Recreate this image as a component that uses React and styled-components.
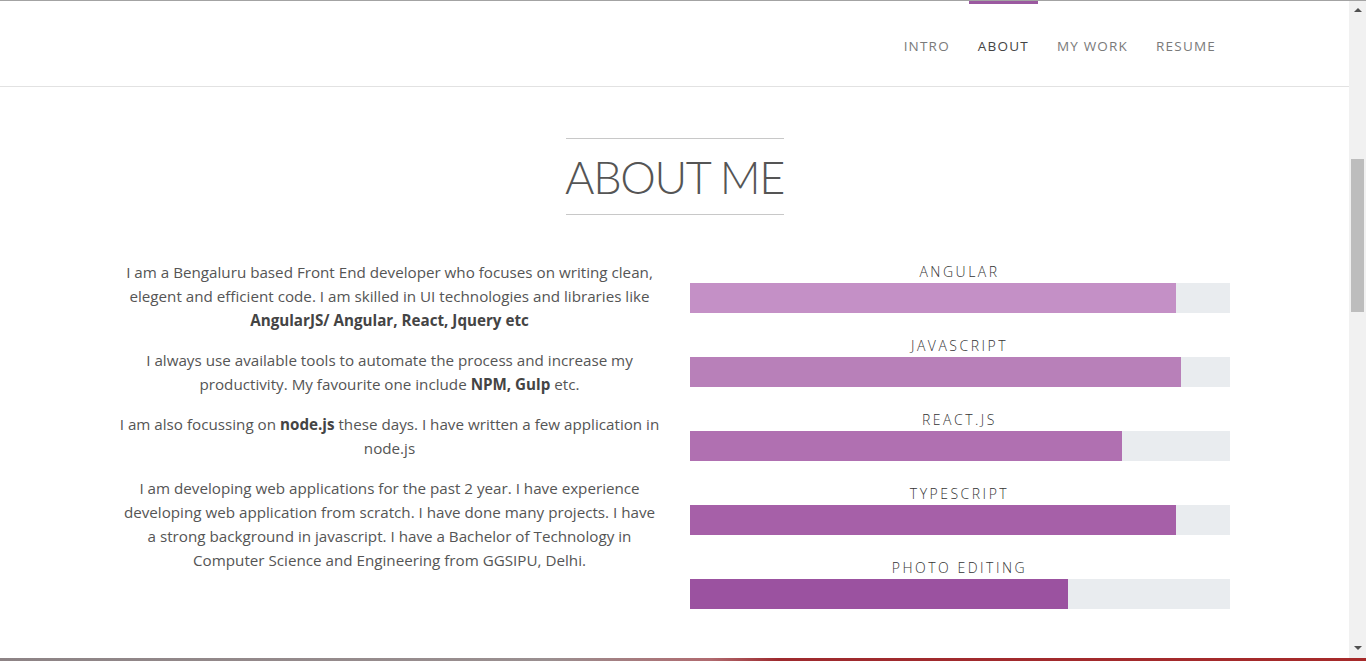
import React from "react";
import styled, { createGlobalStyle } from "styled-components";

const GlobalStyle = createGlobalStyle`
  html, body {
    margin: 0;
    padding: 0;
    height: 100%;
    overflow: hidden;
  }
  body {
    font-family: "Open Sans", "Liberation Sans", sans-serif;
    color: #555;
    background: #fff;
  }
`;

const Screen = styled.div`
  height: 661px;
  display: flex;
  flex-direction: column;
  border-top: 1px solid #a3a3a3;
  box-sizing: border-box;
`;

const Body = styled.div`
  flex: 1;
  display: flex;
  min-height: 0;
`;

const Page = styled.div`
  flex: 1;
  overflow: hidden;
`;

const NavBar = styled.nav`
  height: 85px;
  border-bottom: 1px solid #e2e2e2;
  display: flex;
  justify-content: flex-end;
  padding-right: 124px;
`;

const NavLink = styled.a`
  display: flex;
  align-items: center;
  padding: 2px 9px 0;
  margin-left: 10px;
  font-size: 13.5px;
  letter-spacing: 1.2px;
  text-decoration: none;
  color: ${(p) => (p.$active ? "#444" : "#7a7a7a")};
  border-top: 4px solid ${(p) => (p.$active ? "#9b59a0" : "transparent")};
  margin-top: -1px;
`;

const Section = styled.section`
  padding-top: 51px;
  display: flex;
  flex-direction: column;
  align-items: center;
`;

const Title = styled.h2`
  margin: 0;
  width: 218px;
  height: 75px;
  border-top: 1px solid #c8c8c8;
  border-bottom: 1px solid #c8c8c8;
  display: flex;
  align-items: center;
  justify-content: center;
  white-space: nowrap;
  font-family: Lato, "Open Sans", sans-serif;
  font-size: 45px;
  letter-spacing: -1.4px;
  font-weight: 300;
  color: #555;
`;

const Columns = styled.div`
  margin-top: 45px;
  display: grid;
  grid-template-columns: 550px 540px;
  column-gap: 25px;
  margin-right: 5px;
`;

const Bio = styled.div`
  text-align: center;
  font-size: 15.2px;
  line-height: 24px;
  color: #555;
  padding: 0 4px;
`;

const Para = styled.p`
  margin: 0 0 16px;
  b {
    font-weight: 700;
    color: #444;
  }
`;

const Skills = styled.div`
  display: flex;
  flex-direction: column;
  gap: 23px;
  padding-top: 2px;
`;

const Skill = styled.div`
  display: flex;
  flex-direction: column;
  align-items: center;
`;

const Label = styled.div`
  font-size: 14px;
  font-weight: 300;
  letter-spacing: 2.5px;
  color: #333;
  line-height: 20px;
  margin-bottom: 1px;
`;

const Track = styled.div`
  width: 100%;
  height: 30px;
  background: #e9ecef;
`;

const Fill = styled.div`
  height: 100%;
  background: ${(p) => p.$color};
`;

const Scrollbar = styled.div`
  width: 17px;
  background: #f1f1f1;
  display: flex;
  flex-direction: column;
  align-items: center;
`;

const Arrow = styled.div`
  width: 0;
  height: 0;
  border-left: 4px solid transparent;
  border-right: 4px solid transparent;
  ${(p) => (p.$down ? "border-top: 4px solid #505050;" : "border-bottom: 4px solid #505050;")}
  margin: ${(p) => (p.$down ? "auto 0 8px" : "7px 0 0")};
`;

const Thumb = styled.div`
  width: 13px;
  height: 153px;
  margin-top: 147px;
  background: #bdbdbd;
`;

const Taskbar = styled.div`
  height: 3px;
  background: linear-gradient(
    to right,
    #8d8385 0%,
    #9a8f90 40%,
    #b06a6f 52%,
    #9e2a2e 57%,
    #a62a2a 100%
  );
`;

const skills = [
  { name: "ANGULAR", value: 90, color: "#c490c6" },
  { name: "JAVASCRIPT", value: 91, color: "#b880b9" },
  { name: "REACT.JS", value: 80, color: "#b070b1" },
  { name: "TYPESCRIPT", value: 90, color: "#a660a8" },
  { name: "PHOTO EDITING", value: 70, color: "#9b52a0" },
];

const App = () => {
  return (
    <Screen>
      <GlobalStyle />
      <Body>
        <Page>
          <NavBar>
            <NavLink>INTRO</NavLink>
            <NavLink $active>ABOUT</NavLink>
            <NavLink>MY WORK</NavLink>
            <NavLink>RESUME</NavLink>
          </NavBar>
          <Section>
            <Title>ABOUT ME</Title>
            <Columns>
              <Bio>
                <Para>
                  I am a Bengaluru based Front End developer who focuses on writing clean,
                  elegent and efficient code. I am skilled in UI technologies and libraries like{" "}
                  <b>AngularJS/ Angular, React, Jquery etc</b>
                </Para>
                <Para>
                  I always use available tools to automate the process and increase my
                  productivity. My favourite one include <b>NPM, Gulp</b> etc.
                </Para>
                <Para>
                  I am also focussing on <b>node.js</b> these days. I have written a few application in
                  node.js
                </Para>
                <Para>
                  I am developing web applications for the past 2 year. I have experience
                  developing web application from scratch. I have done many projects. I have
                  a strong background in javascript. I have a Bachelor of Technology in
                  Computer Science and Engineering from GGSIPU, Delhi.
                </Para>
              </Bio>
              <Skills>
                {skills.map((s) => (
                  <Skill key={s.name}>
                    <Label>{s.name}</Label>
                    <Track>
                      <Fill $color={s.color} style={{ width: s.value + "%" }} />
                    </Track>
                  </Skill>
                ))}
              </Skills>
            </Columns>
          </Section>
        </Page>
        <Scrollbar>
          <Arrow />
          <Thumb />
          <Arrow $down />
        </Scrollbar>
      </Body>
      <Taskbar />
    </Screen>
  );
};

export default App;
